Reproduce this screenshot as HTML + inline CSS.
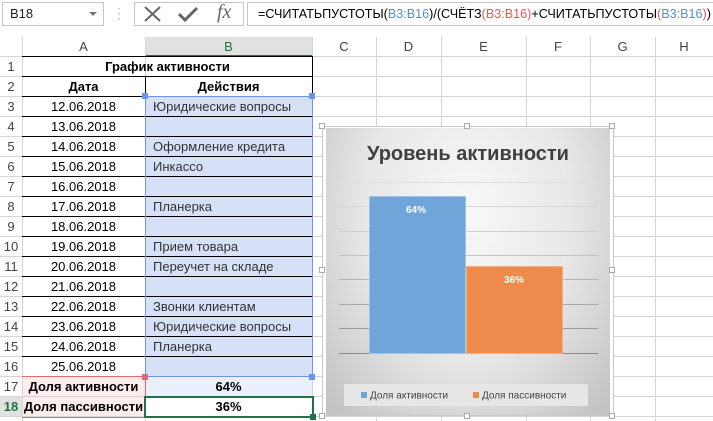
<!DOCTYPE html>
<html><head><meta charset="utf-8"><style>
*{margin:0;padding:0;box-sizing:border-box}
body{width:713px;height:421px;overflow:hidden;background:#fff;font-family:"Liberation Sans",Calibri,sans-serif;position:relative;font-size:13px;color:#000}
.a{position:absolute}
.vl{position:absolute;width:1px;background:#d4d4d4;top:37px;height:384px}
.hl{position:absolute;height:1px;background:#d4d4d4;left:0;width:713px}
.rh{position:absolute;left:0;width:22px;text-align:center;color:#444;font-size:13px;line-height:20px}
.ch{position:absolute;top:37px;height:20px;line-height:20px;text-align:center;color:#444;font-size:13px}
.c{position:absolute;line-height:20px;font-size:13px;white-space:nowrap}
</style></head><body>
<div class="a" style="left:0;top:0;width:713px;height:37px;background:#fff"></div>
<div class="a" style="left:2px;top:2px;width:102px;height:24px;border:1px solid #c6c6c6;font-size:13px;line-height:22px;padding-left:7px;color:#222">B18</div>
<div class="a" style="left:89px;top:12px;width:0;height:0;border-left:4px solid transparent;border-right:4px solid transparent;border-top:4px solid #777"></div>
<div class="a" style="left:117px;top:6px;color:#999;font-size:12px;line-height:5px">·<br>·<br>·</div>
<div class="a" style="left:134px;top:2px;width:110px;height:24px;border:1px solid #c6c6c6"></div>
<svg class="a" style="left:143px;top:5px" width="20" height="18"><path d="M2 2L17 16M17 2L2 16" stroke="#666" stroke-width="2"/></svg>
<svg class="a" style="left:177px;top:5px" width="22" height="18"><path d="M2 9L8 15L20 3" stroke="#666" stroke-width="3" fill="none"/></svg>
<div class="a" style="left:217px;top:1px;font-family:'Liberation Serif',serif;font-style:italic;font-size:20px;color:#666">fx</div>
<div class="a" style="left:247px;top:2px;width:470px;height:24px;border:1px solid #c6c6c6;font-size:12.6px;line-height:22px;padding-left:10px;white-space:nowrap;color:#000">=СЧИТАТЬПУСТОТЫ(<span style="color:#5b8bd8">B3:B16</span>)/(СЧЁТЗ<span style="color:#e55">(B3:B16)</span>+СЧИТАТЬПУСТОТЫ<span style="color:#e55">(</span><span style="color:#5b8bd8">B3:B16</span><span style="color:#e55">)</span>)</div>
<div class="a" style="left:0;top:37px;width:713px;height:20px;background:#fff"></div>
<div class="a" style="left:145px;top:37px;width:167px;height:20px;background:#e1e1e1;border-bottom:2px solid #217346"></div>
<div class="a" style="left:0;top:397px;width:22px;height:20px;background:#e1e1e1"></div>
<div class="ch" style="left:22px;width:123px">A</div>
<div class="ch" style="left:145px;width:167px;color:#217346">B</div>
<div class="ch" style="left:312px;width:64px">C</div>
<div class="ch" style="left:376px;width:65px">D</div>
<div class="ch" style="left:441px;width:85px">E</div>
<div class="ch" style="left:526px;width:64px">F</div>
<div class="ch" style="left:590px;width:65px">G</div>
<div class="ch" style="left:655px;width:58px">H</div>
<div class="a" style="left:146px;top:97px;width:166px;height:280px;background:#d6e0f6"></div>
<div class="a" style="left:146px;top:377px;width:166px;height:20px;background:#eaf0fb"></div>
<div class="a" style="left:23px;top:377px;width:122px;height:40px;background:#fcecec"></div>
<div class="vl" style="left:22px"></div><div class="vl" style="left:145px"></div><div class="vl" style="left:312px"></div><div class="vl" style="left:376px"></div><div class="vl" style="left:441px"></div><div class="vl" style="left:526px"></div><div class="vl" style="left:590px"></div><div class="vl" style="left:655px"></div>
<div class="hl" style="top:56px"></div><div class="hl" style="top:76px"></div><div class="hl" style="top:96px"></div><div class="hl" style="top:116px"></div><div class="hl" style="top:136px"></div><div class="hl" style="top:156px"></div><div class="hl" style="top:176px"></div><div class="hl" style="top:196px"></div><div class="hl" style="top:216px"></div><div class="hl" style="top:236px"></div><div class="hl" style="top:256px"></div><div class="hl" style="top:276px"></div><div class="hl" style="top:296px"></div><div class="hl" style="top:316px"></div><div class="hl" style="top:336px"></div><div class="hl" style="top:356px"></div><div class="hl" style="top:376px"></div><div class="hl" style="top:396px"></div><div class="hl" style="top:416px"></div>
<div class="a" style="left:22px;top:56px;width:291px;height:321px;border:1px solid #000;border-left:none"></div>
<div class="a" style="left:22px;top:76px;width:291px;height:1px;background:#000"></div>
<div class="a" style="left:145px;top:76px;width:1px;height:301px;background:#000"></div>
<div class="a" style="left:22px;top:96px;width:290px;height:281px;background:repeating-linear-gradient(to bottom,#000 0,#000 1px,transparent 1px,transparent 20px)"></div>
<div class="rh" style="top:57px">1</div><div class="rh" style="top:77px">2</div><div class="rh" style="top:97px">3</div><div class="rh" style="top:117px">4</div><div class="rh" style="top:137px">5</div><div class="rh" style="top:157px">6</div><div class="rh" style="top:177px">7</div><div class="rh" style="top:197px">8</div><div class="rh" style="top:217px">9</div><div class="rh" style="top:237px">10</div><div class="rh" style="top:257px">11</div><div class="rh" style="top:277px">12</div><div class="rh" style="top:297px">13</div><div class="rh" style="top:317px">14</div><div class="rh" style="top:337px">15</div><div class="rh" style="top:357px">16</div><div class="rh" style="top:377px">17</div><div class="rh" style="top:397px;color:#217346;font-weight:bold">18</div>
<div class="c" style="left:22px;top:57px;width:291px;text-align:center;font-weight:bold">График активности</div>
<div class="c" style="left:22px;top:77px;width:123px;text-align:center;font-weight:bold">Дата</div>
<div class="c" style="left:145px;top:77px;width:167px;text-align:center;font-weight:bold">Действия</div>
<div class="c" style="left:22px;top:97px;width:123px;text-align:center;line-height:20px">12.06.2018<br>13.06.2018<br>14.06.2018<br>15.06.2018<br>16.06.2018<br>17.06.2018<br>18.06.2018<br>19.06.2018<br>20.06.2018<br>21.06.2018<br>22.06.2018<br>23.06.2018<br>24.06.2018<br>25.06.2018</div>
<div class="c" style="left:153px;top:97px;color:#333;line-height:20px">Юридические вопросы<br>&nbsp;<br>Оформление кредита<br>Инкассо<br>&nbsp;<br>Планерка<br>&nbsp;<br>Прием товара<br>Переучет на складе<br>&nbsp;<br>Звонки клиентам<br>Юридические вопросы<br>Планерка</div>
<div class="c" style="left:22px;top:377px;width:123px;text-align:center;font-weight:bold">Доля активности</div>
<div class="c" style="left:22px;top:397px;width:123px;text-align:center;font-weight:bold">Доля пассивности</div>
<div class="c" style="left:145px;top:377px;width:167px;text-align:center;font-weight:bold">64%</div>
<div class="c" style="left:145px;top:397px;width:167px;text-align:center;font-weight:bold">36%</div>
<div class="a" style="left:145px;top:96px;width:168px;height:281px;border:1.5px solid #6a95e8"></div>
<div class="a" style="left:22px;top:376px;width:124px;height:42px;border:1.5px solid #e46a6a;border-left:none"></div>
<div class="a" style="left:144px;top:396px;width:170px;height:22px;border:2px solid #217346"></div>
<div class="a" style="left:142px;top:93px;width:6px;height:6px;background:#6a95e8"></div>
<div class="a" style="left:309px;top:93px;width:6px;height:6px;background:#6a95e8"></div>
<div class="a" style="left:309px;top:374px;width:6px;height:6px;background:#6a95e8"></div>
<div class="a" style="left:142px;top:374px;width:6px;height:6px;background:#e46a6a"></div>
<div class="a" style="left:310px;top:414px;width:6px;height:6px;background:#217346"></div>
<div class="a" style="left:322px;top:126px;width:292px;height:290px;border:1px solid #c8c8c8;background:#fff"></div>
<div class="a" style="left:326px;top:128px;width:284px;height:287px;background:radial-gradient(ellipse at 50% 30%,#f8f8f8 0%,#e8e8e8 50%,#c0c0c0 100%)"></div>
<div class="a" style="left:326px;top:143px;width:284px;text-align:center;font-size:20px;font-weight:bold;color:#404040">Уровень активности</div>
<svg class="a" style="left:326px;top:128px" width="284" height="287">
<g stroke-width="1">
<line x1="13" x2="272" y1="54.5" y2="54.5" stroke="#dedede"/>
<line x1="13" x2="272" y1="78.5" y2="78.5" stroke="#d6d6d6"/>
<line x1="13" x2="272" y1="103.5" y2="103.5" stroke="#cfcfcf"/>
<line x1="13" x2="272" y1="127.5" y2="127.5" stroke="#c4c4c4"/>
<line x1="13" x2="272" y1="151.5" y2="151.5" stroke="#b4b4b4"/>
<line x1="13" x2="272" y1="176.5" y2="176.5" stroke="#a8a8a8"/>
<line x1="13" x2="272" y1="200.5" y2="200.5" stroke="#9a9a9a"/>
<line x1="13" x2="272" y1="225.5" y2="225.5" stroke="#888"/>
</g>
<rect x="43.5" y="68.5" width="96" height="157" fill="#6fa5d9" stroke="#9fc3e6"/>
<rect x="140.5" y="138.5" width="96" height="87" fill="#ec8b4b" stroke="#f2b08a"/>
<text x="90" y="85" fill="#fff" font-size="10" font-weight="bold" text-anchor="middle" font-family="Liberation Sans">64%</text>
<text x="188" y="155" fill="#fff" font-size="10" font-weight="bold" text-anchor="middle" font-family="Liberation Sans">36%</text>
<rect x="18" y="256" width="244" height="22" fill="#e6e6e6"/>
<rect x="35" y="264" width="6" height="6" fill="#6fa5d9"/>
<text x="44" y="270.5" font-size="10" fill="#444" font-family="Liberation Sans">Доля активности</text>
<rect x="147" y="264" width="6" height="6" fill="#ec8b4b"/>
<text x="156" y="270.5" font-size="10" fill="#444" font-family="Liberation Sans">Доля пассивности</text>
</svg>
<div class="a" style="left:319px;top:123px;width:6px;height:6px;border:1px solid #aaa;background:#fff"></div>
<div class="a" style="left:464px;top:123px;width:6px;height:6px;border:1px solid #aaa;background:#fff"></div>
<div class="a" style="left:609px;top:123px;width:6px;height:6px;border:1px solid #aaa;background:#fff"></div>
<div class="a" style="left:319px;top:267px;width:6px;height:6px;border:1px solid #aaa;background:#fff"></div>
<div class="a" style="left:609px;top:267px;width:6px;height:6px;border:1px solid #aaa;background:#fff"></div>
<div class="a" style="left:319px;top:413px;width:6px;height:6px;border:1px solid #aaa;background:#fff"></div>
<div class="a" style="left:464px;top:413px;width:6px;height:6px;border:1px solid #aaa;background:#fff"></div>
<div class="a" style="left:609px;top:413px;width:6px;height:6px;border:1px solid #aaa;background:#fff"></div>
</body></html>
